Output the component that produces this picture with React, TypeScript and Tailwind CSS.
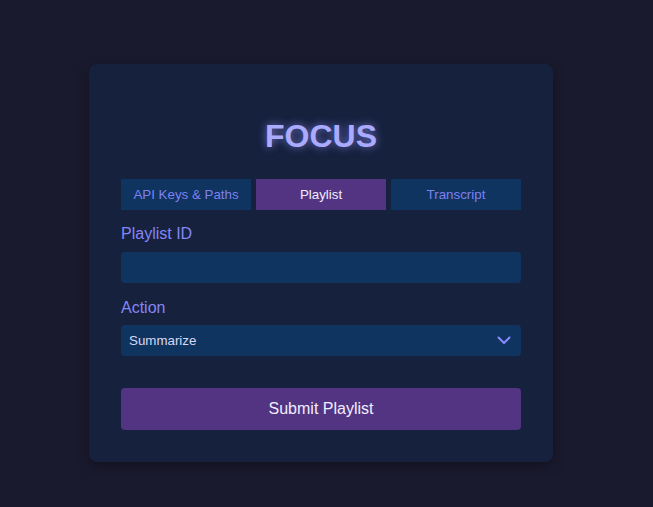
import { useState } from "react";

const TABS = ["API Keys & Paths", "Playlist", "Transcript"];

const App = () => {
  const [tab, setTab] = useState("Playlist");
  const [action, setAction] = useState("summarize");

  return (
    <div className="min-h-screen bg-[#1a1a2e] font-['Liberation_Sans',Arial,sans-serif] flex justify-center pt-16 pr-[11px]">
      <div className="w-[464px] h-[398px] bg-[#16213e] rounded-lg shadow-[0_4px_12px_rgba(0,0,0,0.35)] px-8 pt-[54px] pb-8 flex flex-col">
        <h1 className="text-[32px] leading-[37px] font-bold text-center text-[#aaaaff] [text-shadow:0_0_8px_rgba(150,150,255,0.7)]">
          FOCUS
        </h1>

        {/* tab buttons */}
        <div className="mt-6 flex gap-[5px]">
          {TABS.map((t) => (
            <button
              key={t}
              onClick={() => setTab(t)}
              className={
                t === tab
                  ? "flex-1 h-[31px] text-[13.33px] bg-[#533483] text-[#f0eeff]"
                  : "flex-1 h-[31px] text-[13.33px] bg-[#0f3460] text-[#8080f0]"
              }
            >
              {t}
            </button>
          ))}
        </div>

        <label className="mt-[14px] text-base leading-[20px] text-[#8585f5]">Playlist ID</label>
        <input
          type="text"
          className="mt-[8px] h-[31px] w-full rounded bg-[#0f3460] px-2 text-[13.33px] text-[#d8d8f5] outline-none"
        />

        <label className="mt-[15px] text-base leading-[20px] text-[#8585f5]">Action</label>
        <div className="relative mt-[7px]">
          <select
            value={action}
            onChange={(e) => setAction(e.target.value)}
            className="appearance-none h-[31px] w-full rounded bg-[#0f3460] pl-2 pr-8 text-[13.33px] text-[#d8d8f5] outline-none"
          >
            <option value="summarize">Summarize</option>
            <option value="transcribe">Transcribe</option>
          </select>
          <svg
            className="pointer-events-none absolute right-[10px] top-[11px]"
            width="14"
            height="9"
            viewBox="0 0 14 9"
            fill="none"
          >
            <path d="M1.5 1.5 L7 7 L12.5 1.5" stroke="#8a8aff" strokeWidth="2" strokeLinecap="round" strokeLinejoin="round" />
          </svg>
        </div>

        <button className="mt-8 h-[42px] w-full rounded bg-[#533483] text-base text-[#f0eeff]">
          Submit Playlist
        </button>
      </div>
    </div>
  );
};

export default App;
